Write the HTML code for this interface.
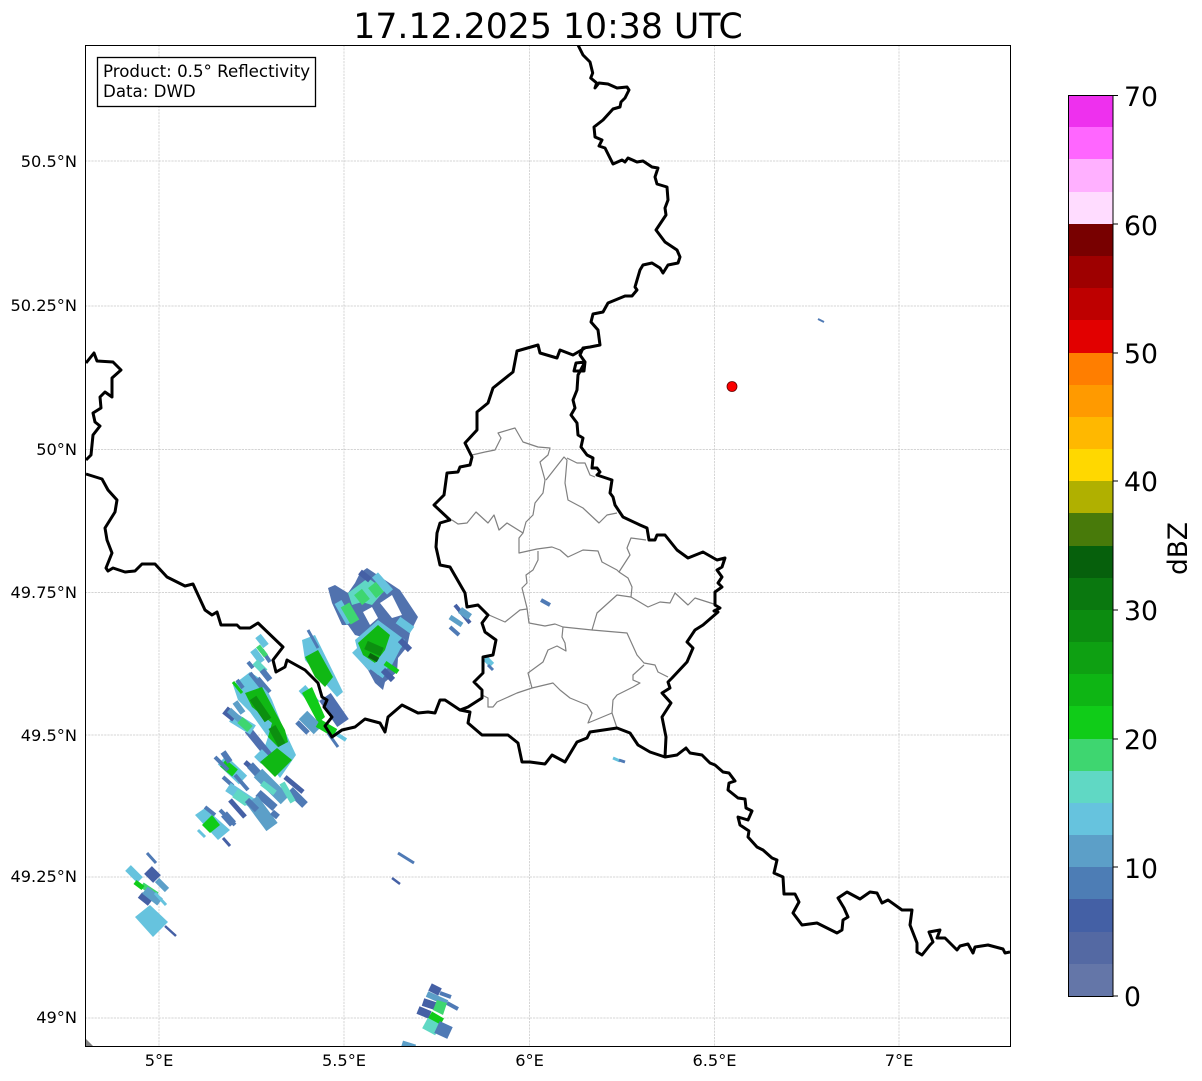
<!DOCTYPE html>
<html><head><meta charset="utf-8"><style>
html,body{margin:0;padding:0;background:#fff;width:1202px;height:1081px;overflow:hidden}
svg{display:block}
text{font-family:"DejaVu Sans",sans-serif;fill:#000}
</style></head><body>
<svg width="1202" height="1081" viewBox="0 0 1202 1081" xmlns="http://www.w3.org/2000/svg">
<defs><clipPath id="ax"><rect x="85" y="45" width="925" height="1001"/></clipPath></defs>
<rect width="1202" height="1081" fill="#fff"/>
<g clip-path="url(#ax)">
<path d="M159 45V1046M344 45V1046M529.5 45V1046M714.5 45V1046M899 45V1046M85 161H1010M85 306H1010M85 449.5H1010M85 592.5H1010M85 735H1010M85 877H1010M85 1018H1010" stroke="#c6c6c6" stroke-width=".7" stroke-dasharray="2.2 1" fill="none"/>
<polygon points="85,1038 93,1046 85,1046" fill="#808080"/>
<g fill="none" stroke-linecap="butt">
<!-- NE ring cluster -->
<polygon fill="#5172ae" stroke="none" points="360,573 367,568 385,580 400,590 418,617 413,627 410,633 407,647 398,658 397,672 385,682 383,690 375,683 368,670 355,655 362,637 355,635 348,625 342,625 332,603 328,588 335,585 348,593 355,583"/>
<polygon fill="#fff" stroke="none" points="363,612 372,607 378,618 370,625"/>
<polygon fill="#fff" stroke="none" points="380,603 392,595 402,615 392,618"/>
<polygon fill="#60d8c4" stroke="none" points="348,593 368,578 385,590 372,605 362,602 352,605"/>
<path stroke="#66c3de" stroke-width="8" d="M338 602L350 623M375 575L390 592M398 620L412 630M375 625L390 636M383 633L403 645M365 660L385 675M355 650L372 668"/>
<path stroke="#3ed670" stroke-width="10" d="M345 605L355 622M358 592L366 602M372 585L380 595"/>
<polygon fill="#66c3de" stroke="none" points="355,640 378,620 405,640 392,665 378,675 360,660"/>
<polygon fill="#10b814" stroke="none" points="358,643 378,625 390,635 385,650 375,663 363,655"/>
<path stroke="#0c8f10" stroke-width="9" d="M366 645L382 652"/>
<path stroke="#0a640d" stroke-width="5" d="M369 655L378 660"/>
<path stroke="#10cc18" stroke-width="5" d="M385 663L398 672"/>
<path stroke="#4560a5" stroke-width="6" d="M383 670L393 680M400 640L410 650M360 572L370 580"/>
<!-- Main column -->
<polygon fill="#66c3de" stroke="none" points="233,685 250,672 262,680 272,700 282,725 296,755 280,778 262,755 268,737 250,712 238,700"/>
<path stroke="#4f6fb0" stroke-width="8" d="M248 730L270 757"/>
<path stroke="#4f7ab5" stroke-width="4" d="M248 662L253 668M258 678L270 692M250 673L262 688M237 680L243 688"/>
<path stroke="#66c3de" stroke-width="11" d="M232 717L253 730M258 753L265 760"/>
<path stroke="#4560a5" stroke-width="9" d="M225 710L235 718"/>
<path stroke="#5c9fc8" stroke-width="6" d="M235 702L243 713M229 710L240 720"/>
<path stroke="#3ed670" stroke-width="8" d="M240 720L250 729"/>
<path stroke="#10cc18" stroke-width="3" d="M233 682L242 693"/>
<polygon fill="#10b814" stroke="none" points="245,693 262,687 278,717 285,730 288,742 278,747 268,737 272,723 252,707"/>
<path stroke="#0c8f10" stroke-width="8" d="M253 698L268 720M272 727L282 745"/>
<polygon fill="#10b814" stroke="none" points="260,762 277,748 292,760 275,777"/>
<!-- lower clusters -->
<path stroke="#66c3de" stroke-width="12" d="M222 760L243 780"/>
<path stroke="#10cc18" stroke-width="9" d="M223 763L235 773"/>
<path stroke="#4f7ab5" stroke-width="4" d="M215 757L228 770M235 775L248 790M223 777L233 786M262 650L270 662"/>
<path stroke="#4f7ab5" stroke-width="6" d="M223 752L230 762"/>
<path stroke="#66c3de" stroke-width="10" d="M228 787L252 803"/>
<path stroke="#60d8c4" stroke-width="10" d="M235 793L248 802"/>
<path stroke="#4560a5" stroke-width="5" d="M230 800L245 817M245 762L262 777M285 777L303 792"/>
<path stroke="#4f7ab5" stroke-width="8" d="M250 765L262 778M290 790L305 805M258 793L275 808"/>
<path stroke="#5c9fc8" stroke-width="12" d="M258 773L285 800"/>
<path stroke="#60d8c4" stroke-width="6" d="M262 783L275 793M282 783L293 802"/>
<path stroke="#5c9fc8" stroke-width="14" d="M252 800L272 827"/>
<path stroke="#4f7ab5" stroke-width="6" d="M272 812L278 817M247 800L257 810"/>
<!-- Bottom-left of main -->
<polygon fill="#66c3de" stroke="none" points="195,815 205,808 230,830 218,840"/>
<polygon fill="#10cc18" stroke="none" points="202,825 212,815 220,825 210,833"/>
<path stroke="#4f7ab5" stroke-width="4" d="M205 807L215 815M220 810L235 825"/>
<path stroke="#4f7ab5" stroke-width="8" d="M224 814L233 824"/>
<path stroke="#4560a5" stroke-width="3" d="M223 838L230 846"/>
<path stroke="#66c3de" stroke-width="3" d="M198 830L205 837"/>
<!-- Cluster A -->
<path stroke="#66c3de" stroke-width="7" d="M258 636L266 646M253 650L262 662"/>
<path stroke="#60d8c4" stroke-width="7" d="M255 662L265 672"/>
<path stroke="#3ed670" stroke-width="5" d="M258 646L266 656"/>
<path stroke="#4f7ab5" stroke-width="6" d="M262 670L270 680"/>
<!-- Cluster D -->
<polygon fill="#66c3de" stroke="none" points="302,640 315,635 343,692 337,697 305,660"/>
<path stroke="#4f7ab5" stroke-width="3" d="M308 630L318 648"/>
<polygon fill="#10b814" stroke="none" points="305,657 318,650 333,677 325,687 315,677"/>
<path stroke="#66c3de" stroke-width="9" d="M302 688L316 704"/>
<polygon fill="#10cc18" stroke="none" points="302,693 312,687 325,717 318,723"/>
<path stroke="#4f6fb0" stroke-width="14" d="M325 697L343 723"/>
<path stroke="#5c9fc8" stroke-width="12" d="M303 715L318 730"/>
<path stroke="#4f7ab5" stroke-width="5" d="M297 722L308 733"/>
<path stroke="#10cc18" stroke-width="9" d="M318 723L335 733"/>
<path stroke="#4f7ab5" stroke-width="3" d="M328 733L338 747"/>
<path stroke="#66c3de" stroke-width="4" d="M335 733L346 740"/>
<!-- F -->
<polygon fill="#66c3de" stroke="none" points="135,917 150,905 168,922 153,937"/>
<path stroke="#4f7ab5" stroke-width="3" d="M147 853L156 863M398 853L414 863"/>
<path stroke="#66c3de" stroke-width="8" d="M128 868L140 880"/>
<path stroke="#4560a5" stroke-width="11" d="M148 870L157 879"/>
<path stroke="#5c9fc8" stroke-width="6" d="M157 880L167 890"/>
<path stroke="#3ed670" stroke-width="6" d="M142 885L157 895"/>
<path stroke="#10cc18" stroke-width="5" d="M135 882L143 888"/>
<path stroke="#4560a5" stroke-width="7" d="M140 895L150 903"/>
<path stroke="#5c9fc8" stroke-width="9" d="M145 890L160 902"/>
<path stroke="#66c3de" stroke-width="3" d="M155 893L166 905"/>
<path stroke="#4560a5" stroke-width="2.5" d="M165 926L176 936M392 878L400 884"/>
<!-- G -->
<path stroke="#4560a5" stroke-width="8" d="M430 987L440 992M423 1002L435 1006M418 1010L430 1015"/>
<path stroke="#5c9fc8" stroke-width="6" d="M427 994L447 1003"/>
<path stroke="#4f7ab5" stroke-width="4" d="M440 993L451 997M447 1003L458 1009"/>
<polygon fill="#3ed670" stroke="none" points="437,1000 447,1003 443,1015 433,1010"/>
<path stroke="#10cc18" stroke-width="8" d="M430 1015L442 1022"/>
<path stroke="#60d8c4" stroke-width="12" d="M425 1023L438 1030"/>
<path stroke="#4f7ab5" stroke-width="13" d="M437 1027L450 1033"/>
<path stroke="#5c9fc8" stroke-width="7" d="M402 1044L415 1048"/>
<!-- small -->
<path stroke="#4560a5" stroke-width="4" d="M455 605L470 623"/>
<path stroke="#5c9fc8" stroke-width="7" d="M460 610L470 617"/>
<path stroke="#5c9fc8" stroke-width="5" d="M450 617L462 625"/>
<path stroke="#4f7ab5" stroke-width="4" d="M450 627L459 635"/>
<path stroke="#66c3de" stroke-width="6" d="M485 658L492 665"/>
<path stroke="#4f7ab5" stroke-width="3" d="M488 665L493 670"/>
<path stroke="#4f7ab5" stroke-width="4" d="M541 600L550 605"/>
<path stroke="#66c3de" stroke-width="3" d="M613 758L620 761"/>
<path stroke="#4f7ab5" stroke-width="3" d="M619 760L625 762"/>
<path stroke="#4f7ab5" stroke-width="2" d="M818 319L824 322"/>
</g>
<g fill="none" stroke="#808080" stroke-width="1.2" stroke-linejoin="round">
<path d="M472 455L485 452L495 450L501 438L498 433L515 428L523 442L538 447L550 448L548 455L540 462L545 480L543 493L535 503L533 515L526 522L523 533"/>
<path d="M452 520L458 524L467 523L476 512L488 523L494 515L499 530L507 523L523 533L519 538L519 553L537 549L552 547L560 550L568 557L583 550L598 551L602 562L617 570L619 572L628 578L632 587L631 597"/>
<path d="M546 480L564 457L567 460L565 483L568 500L583 508L599 523L607 515L617 513"/>
<path d="M567 458L577 463L585 463L590 475L595 477"/>
<path d="M646 540L631 538L627 548L630 555L619 572"/>
<path d="M538 551L538 560L533 570L526 575L527 583L522 588L527 608L529 623L545 626L555 624L563 627L592 630L597 613L617 595L631 597L648 607L660 602L670 603L675 593L688 605L695 598L717 605"/>
<path d="M489 615L505 622L520 610L527 609"/>
<path d="M563 627L562 637L565 643L566 651L557 646L548 650L543 662L528 673L532 688L517 693L497 702L493 707L488 707L488 698L482 695"/>
<path d="M592 630L627 633L637 655L644 663L655 665L658 672L668 677"/>
<path d="M644 665L633 675L633 680L640 683L633 687L617 695L613 700L612 713L617 728"/>
<path d="M532 688L553 683L560 690L570 698L587 705L592 713L588 723L612 713"/>
</g>
<g fill="none" stroke="#000" stroke-width="3" stroke-linejoin="round">
<path d="M578 45L583 55L590 62L592.7 73L590.7 78L596.7 83L595 88L599 83L608 84L617 88L627 87L629 90L625 98L621 102L620 107L613 109L603 120L594 127L595 137L602 140L599 146L605 148L613 164L622 160L625 162L628 158L637 162L643 161L652 167L658 168L655 177L657 184L667 187L668 200L665 208L666 215L656 230L665 242L677 250L680 257L678 263L668 265L663 273L660 268L652 263L643 265L640 270L635 287L637 290L632 296L625 296L608 303L603 312L593 314L591 322L598 330L600 345L590 347L583 348L580 355L585 362L576 363L574 371L584 371L585 362L578 375L577 390L573 400L575 408L571 415L577 423L578 435L583 438L581 447L587 455L593 458L592 468L597 468L600 472L597 475L612 480L610 493L613 497L615 505L623 517L640 525L647 528L649 540L655 540L657 535L665 535L677 550L688 558L703 552L717 560L725 558L722 567L717 570L722 577L718 583L722 587L715 592L715 605L720 608L714 611L718 612L703 625L695 630L687 642L693 648L687 662L672 678L668 682L670 688L662 693L671 703L662 717L666 737L665 757"/>
<path d="M585 348L573 355L560 350L557 358L540 353L538 345L517 351L513 372L493 388L488 403L477 412L477 430L465 443L472 457L470 465L460 467L458 472L447 473L444 495L434 505L450 520L440 523L437 533L436 547L440 565L450 567L465 593L467 607L478 605L488 615L482 623L485 632L496 640L493 655L483 657L483 673L474 682L482 690L482 698L468 707L460 710L470 712L468 723L482 735L508 735L518 743L522 762L530 762L545 764L552 755L565 762L577 742L587 738L590 732L617 728L630 733L638 745L650 752L665 757L677 755L686 748L690 753L702 755L710 763L715 765L723 772L729 773L735 781L729 783L728 790L738 798L745 799L746 808L752 811L748 820L738 817L740 825L749 831L748 837L757 847L763 850L772 858L777 860L774 873L783 877L784 894L795 894L799 902L793 913L802 925L817 923L837 933L842 930L843 920L848 917L844 908L838 898L847 892L860 899L870 892L877 893L882 903L888 900L902 910L912 910L910 925L917 943L917 952L922 955L930 945L933 942L929 932L940 930L937 938L945 938L957 950L960 946L968 944L973 953L975 947L988 945L1003 949L1005 953L1010 952"/>
<path d="M86 363L94 353L97 361L113 362L121 370L112 378L112 397L105 392L100 397L101 408L93 413L95 422L100 426L93 435L91 455L86 460"/>
<path d="M86 474L102 479L108 490L117 500L115 512L105 528L107 540L112 553L106 568L108 571L113 568L125 572L135 571L142 564L155 564L167 577L185 586L193 584L205 610L212 615L217 612L221 625L237 625L240 628L250 628L258 623L283 647L273 660L276 672L285 667L287 660L305 670L318 683L322 697L327 700L324 707L332 717L325 726L332 737L342 730L355 727L365 719L380 723L385 732L388 717L402 705L418 713L428 712L435 713L440 700L445 700L460 710"/>
</g>
<circle cx="732" cy="386.5" r="5" fill="#fb0000" stroke="#600" stroke-width=".8"/>
<rect x="97.5" y="57.5" width="218" height="49" fill="#fff" stroke="#000" stroke-width="1.3"/>
<text x="103" y="77" font-size="16.65">Product: 0.5° Reflectivity</text>
<text x="103" y="97" font-size="16.65">Data: DWD</text>
</g>
<rect x="85.5" y="45.5" width="925" height="1001" fill="none" stroke="#000" stroke-width="1"/>
<text x="548" y="38" font-size="34.7" text-anchor="middle">17.12.2025 10:38 UTC</text>
<g font-size="16.2" text-anchor="end">
<text x="77" y="167">50.5°N</text><text x="77" y="311">50.25°N</text><text x="77" y="455">50°N</text><text x="77" y="598">49.75°N</text><text x="77" y="741">49.5°N</text><text x="77" y="882">49.25°N</text><text x="77" y="1023">49°N</text>
</g>
<g font-size="16.2" text-anchor="middle">
<text x="159" y="1066">5°E</text><text x="344" y="1066">5.5°E</text><text x="529.5" y="1066">6°E</text><text x="714.5" y="1066">6.5°E</text><text x="899" y="1066">7°E</text>
</g>
<g>
<rect x="1068.5" y="95.5" width="44.5" height="33" fill="#ee30ee"/>
<rect x="1068.5" y="127" width="44.5" height="33" fill="#ff66ff"/>
<rect x="1068.5" y="159" width="44.5" height="33" fill="#ffb0ff"/>
<rect x="1068.5" y="192" width="44.5" height="33" fill="#ffdcff"/>
<rect x="1068.5" y="224" width="44.5" height="33" fill="#780000"/>
<rect x="1068.5" y="256" width="44.5" height="33" fill="#9e0000"/>
<rect x="1068.5" y="288" width="44.5" height="33" fill="#be0000"/>
<rect x="1068.5" y="320" width="44.5" height="33" fill="#e20000"/>
<rect x="1068.5" y="353" width="44.5" height="33" fill="#ff7e00"/>
<rect x="1068.5" y="385" width="44.5" height="33" fill="#ff9a00"/>
<rect x="1068.5" y="417" width="44.5" height="33" fill="#ffb800"/>
<rect x="1068.5" y="449" width="44.5" height="33" fill="#ffd800"/>
<rect x="1068.5" y="481" width="44.5" height="33" fill="#b0b000"/>
<rect x="1068.5" y="513" width="44.5" height="33" fill="#487a0a"/>
<rect x="1068.5" y="546" width="44.5" height="33" fill="#06600c"/>
<rect x="1068.5" y="578" width="44.5" height="33" fill="#0a780f"/>
<rect x="1068.5" y="610" width="44.5" height="33" fill="#0c8c10"/>
<rect x="1068.5" y="642" width="44.5" height="33" fill="#0ea012"/>
<rect x="1068.5" y="674" width="44.5" height="33" fill="#0eb514"/>
<rect x="1068.5" y="706" width="44.5" height="33" fill="#10cc18"/>
<rect x="1068.5" y="739" width="44.5" height="33" fill="#3ed670"/>
<rect x="1068.5" y="771" width="44.5" height="33" fill="#60d8c4"/>
<rect x="1068.5" y="803" width="44.5" height="33" fill="#66c3de"/>
<rect x="1068.5" y="835" width="44.5" height="33" fill="#5c9fc8"/>
<rect x="1068.5" y="867" width="44.5" height="33" fill="#4d7db5"/>
<rect x="1068.5" y="899" width="44.5" height="33" fill="#4460a5"/>
<rect x="1068.5" y="932" width="44.5" height="33" fill="#5469a3"/>
<rect x="1068.5" y="964" width="44.5" height="32" fill="#6476a8"/>
<rect x="1068.5" y="95.5" width="44.5" height="901" fill="none" stroke="#000" stroke-width="1"/>
<path d="M1113 95.5h5M1113 224h5M1113 353h5M1113 481h5M1113 610h5M1113 739h5M1113 867h5M1113 996h5" stroke="#000" stroke-width="1"/>
</g>
<g font-size="26.7">
<text x="1124" y="106">70</text><text x="1124" y="235">60</text><text x="1124" y="363">50</text><text x="1124" y="491">40</text><text x="1124" y="620">30</text><text x="1124" y="749">20</text><text x="1124" y="878">10</text><text x="1124" y="1006">0</text>
</g>
<text transform="translate(1187,575) rotate(-90)" font-size="26.4">dBZ</text>
</svg>
</body></html>
